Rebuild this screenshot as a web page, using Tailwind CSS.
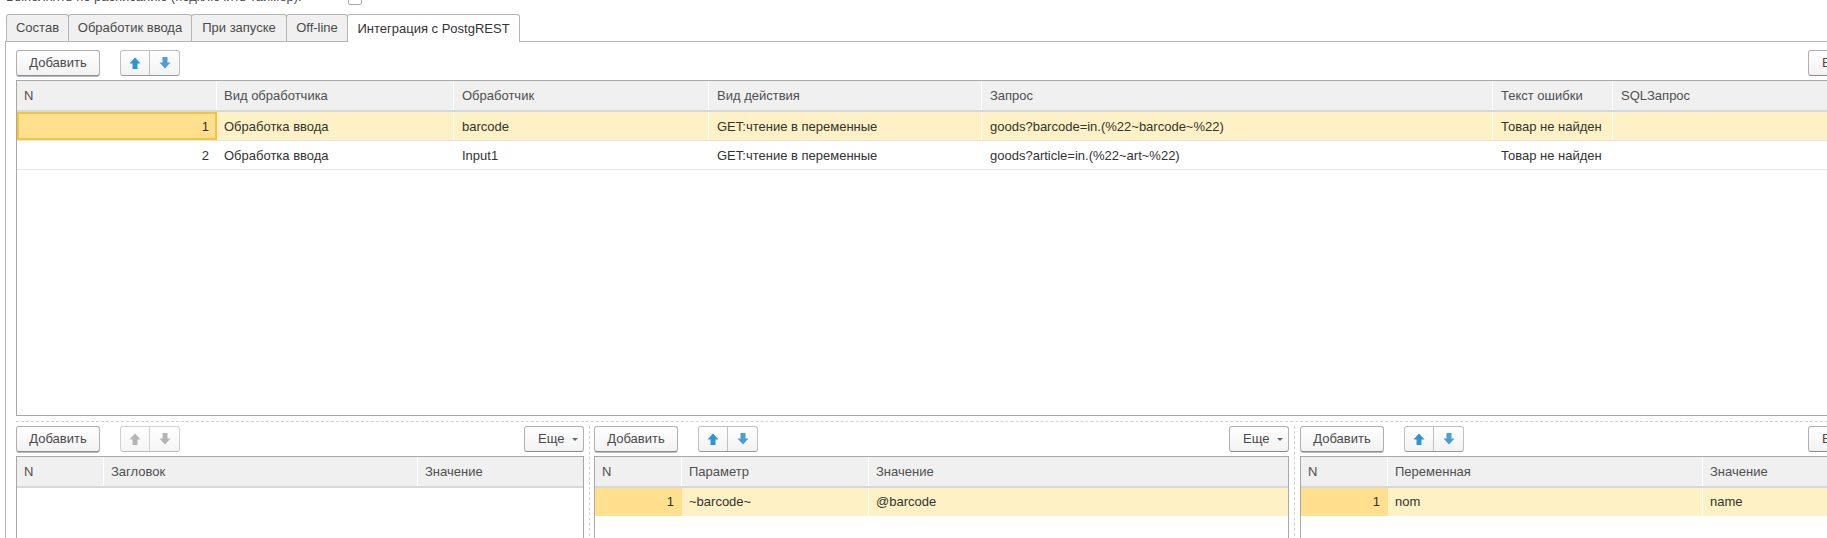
<!DOCTYPE html>
<html lang="ru">
<head>
    <meta charset="UTF-8">
    <title>Интеграция с PostgREST</title>
    <script src="https://cdn.jsdelivr.net/npm/@tailwindcss/browser@4"></script>
</head>
<body class="bg-white">
<div class="w-[1827px] h-[538px] overflow-hidden font-['Liberation_Sans',Arial,sans-serif] text-[13px] text-[#333]">

    <!-- clipped line above the tabs -->
    <div class="h-[5px] overflow-hidden flex items-end pl-[6px]">
        <span class="w-[342px] leading-[16px] whitespace-nowrap text-[#4b4b4b]">Выполнять по расписанию (подключить таймер):</span>
        <span class="block w-[14px] h-[14px] border border-[#aaa] rounded-[2px]"></span>
    </div>

    <!-- tabs -->
    <div class="flex h-[27px] mt-[9px] pl-[6px] text-[#4a4a4a]">
        <div class="w-[63px] flex items-center justify-center bg-[#f0f0f0] border border-b-0 border-[#b5b5b5] rounded-t-[3px]">Состав</div>
        <div class="w-[124px] -ml-px flex items-center justify-center bg-[#f0f0f0] border border-b-0 border-[#b5b5b5] rounded-t-[3px]">Обработик ввода</div>
        <div class="w-[96px] -ml-px flex items-center justify-center bg-[#f0f0f0] border border-b-0 border-[#b5b5b5] rounded-t-[3px]">При запуске</div>
        <div class="w-[62px] -ml-px flex items-center justify-center bg-[#f0f0f0] border border-b-0 border-[#b5b5b5] rounded-t-[3px]">Off-line</div>
        <div class="w-[173px] h-[28px] -ml-px z-10 flex items-center justify-center bg-white border border-b-0 border-[#b5b5b5] rounded-t-[3px] text-[#333]">Интеграция с PostgREST</div>
    </div>

    <!-- tab body -->
    <div class="w-[1900px] h-[497px] border-t border-l border-[#b5b5b5] ml-[5px] pl-[10px]">

        <!-- top toolbar -->
        <div class="flex items-center w-[1852px] h-[26px] mt-[8px] text-[#4a4a4a]">
            <button class="w-[84px] h-[26px] bg-gradient-to-b from-white to-[#f2f2f2] border border-[#b0b0b0] border-b-[#8a8a8a] rounded-[3px] shadow-[0_1px_0_#bbb]">Добавить</button>
            <div class="flex w-[60px] h-[26px] ml-[20px] bg-gradient-to-b from-white to-[#f2f2f2] border border-[#c0c0c0] border-b-[#999] rounded-[3px]">
                <span class="w-1/2 flex items-center justify-center border-r border-[#c0c0c0]"><svg width="12" height="12" viewBox="0 0 12 12"><path d="M6 0.5 11.5 6.5H8.5V12H3.5V6.5H0.5Z" fill="#2c96d2"/></svg></span>
                <span class="w-1/2 flex items-center justify-center"><svg width="12" height="12" viewBox="0 0 12 12"><path d="M6 11.5 11.5 5.5H8.5V0H3.5V5.5H0.5Z" fill="#4a9fd8"/></svg></span>
            </div>
            <button class="w-[60px] h-[26px] ml-auto flex items-center justify-start pl-[13px] gap-[8px] bg-gradient-to-b from-white to-[#f2f2f2] border border-[#b0b0b0] border-b-[#8a8a8a] rounded-[3px]">Еще<span class="w-0 h-0 border-x-[3px] border-t-[3px] border-x-transparent border-t-[#666]"></span></button>
        </div>

        <!-- handlers table -->
        <div class="w-[1852px] h-[336px] mt-[4px] border border-[#a8a8a8]">
            <div class="grid grid-cols-[200px_237px_255px_273px_511px_120px_1fr] h-[31px] bg-[#f0f0f0] border-b-2 border-[#d8d8d8] text-[#4f4f4f]">
                <div class="flex items-center px-[7px] border-r border-white">N</div>
                <div class="flex items-center px-[7px] border-r border-white">Вид обработчика</div>
                <div class="flex items-center px-[8px] border-r border-white">Обработчик</div>
                <div class="flex items-center px-[8px] border-r border-white">Вид действия</div>
                <div class="flex items-center px-[8px] border-r border-white">Запрос</div>
                <div class="flex items-center px-[8px] border-r border-white">Текст ошибки</div>
                <div class="flex items-center px-[8px]">SQLЗапрос</div>
            </div>
            <div class="grid grid-cols-[200px_237px_255px_273px_511px_120px_1fr] h-[29px] bg-[#fdf1c5] border-b border-[#e6e6e6]">
                <div class="flex items-center justify-end px-[6px] pt-[2px] bg-[#fee08e] border-2 border-[#f2c53d]">1</div>
                <div class="flex items-center px-[7px] pt-[2px] border-r border-white">Обработка ввода</div>
                <div class="flex items-center px-[8px] pt-[2px] border-r border-white">barcode</div>
                <div class="flex items-center px-[8px] pt-[2px] border-r border-white">GET:чтение в переменные</div>
                <div class="flex items-center px-[8px] pt-[2px] border-r border-white">goods?barcode=in.(%22~barcode~%22)</div>
                <div class="flex items-center px-[8px] pt-[2px] border-r border-white">Товар не найден</div>
                <div></div>
            </div>
            <div class="grid grid-cols-[200px_237px_255px_273px_511px_120px_1fr] h-[29px] border-b border-[#e6e6e6]">
                <div class="flex items-center justify-end px-[8px] pt-[2px]">2</div>
                <div class="flex items-center px-[7px] pt-[2px]">Обработка ввода</div>
                <div class="flex items-center px-[8px] pt-[2px]">Input1</div>
                <div class="flex items-center px-[8px] pt-[2px]">GET:чтение в переменные</div>
                <div class="flex items-center px-[8px] pt-[2px]">goods?article=in.(%22~art~%22)</div>
                <div class="flex items-center px-[8px] pt-[2px]">Товар не найден</div>
                <div></div>
            </div>
        </div>

        <!-- horizontal splitter -->
        <div class="w-[1852px] mt-[5px] border-t border-dashed border-[#d0d0d0]"></div>

        <!-- lower panels -->
        <div class="flex mt-[4px] w-[1852px] h-[120px]">

            <!-- headers -->
            <div class="w-[568px] shrink-0">
                <div class="flex items-center h-[26px] text-[#4a4a4a]">
                    <button class="w-[84px] h-[26px] bg-gradient-to-b from-white to-[#f2f2f2] border border-[#b0b0b0] border-b-[#8a8a8a] rounded-[3px] shadow-[0_1px_0_#bbb]">Добавить</button>
                    <div class="flex w-[60px] h-[26px] ml-[20px] bg-gradient-to-b from-white to-[#f5f5f5] border border-[#d0d0d0] border-b-[#bbb] rounded-[3px]">
                        <span class="w-1/2 flex items-center justify-center border-r border-[#d0d0d0]"><svg width="12" height="12" viewBox="0 0 12 12"><path d="M6 0.5 11.5 6.5H8.5V12H3.5V6.5H0.5Z" fill="#b5b5b5"/></svg></span>
                        <span class="w-1/2 flex items-center justify-center"><svg width="12" height="12" viewBox="0 0 12 12"><path d="M6 11.5 11.5 5.5H8.5V0H3.5V5.5H0.5Z" fill="#b5b5b5"/></svg></span>
                    </div>
                    <button class="w-[60px] h-[26px] ml-auto flex items-center justify-start pl-[13px] gap-[8px] bg-gradient-to-b from-white to-[#f2f2f2] border border-[#b0b0b0] border-b-[#8a8a8a] rounded-[3px]">Еще<span class="w-0 h-0 border-x-[3px] border-t-[3px] border-x-transparent border-t-[#666]"></span></button>
                </div>
                <div class="h-[90px] mt-[4px] border border-[#a8a8a8]">
                    <div class="grid grid-cols-[87px_314px_1fr] h-[31px] bg-[#f0f0f0] border-b-2 border-[#d8d8d8] text-[#4f4f4f]">
                        <div class="flex items-center px-[7px] border-r border-white">N</div>
                        <div class="flex items-center px-[7px] border-r border-white">Загловок</div>
                        <div class="flex items-center px-[7px]">Значение</div>
                    </div>
                </div>
            </div>

            <!-- vertical splitter -->
            <div class="w-[10px] shrink-0 flex justify-center"><div class="h-full border-l border-dashed border-[#d0d0d0]"></div></div>

            <!-- parameters -->
            <div class="w-[695px] shrink-0">
                <div class="flex items-center h-[26px] text-[#4a4a4a]">
                    <button class="w-[84px] h-[26px] bg-gradient-to-b from-white to-[#f2f2f2] border border-[#b0b0b0] border-b-[#8a8a8a] rounded-[3px] shadow-[0_1px_0_#bbb]">Добавить</button>
                    <div class="flex w-[60px] h-[26px] ml-[20px] bg-gradient-to-b from-white to-[#f2f2f2] border border-[#c0c0c0] border-b-[#999] rounded-[3px]">
                        <span class="w-1/2 flex items-center justify-center border-r border-[#c0c0c0]"><svg width="12" height="12" viewBox="0 0 12 12"><path d="M6 0.5 11.5 6.5H8.5V12H3.5V6.5H0.5Z" fill="#2c96d2"/></svg></span>
                        <span class="w-1/2 flex items-center justify-center"><svg width="12" height="12" viewBox="0 0 12 12"><path d="M6 11.5 11.5 5.5H8.5V0H3.5V5.5H0.5Z" fill="#4a9fd8"/></svg></span>
                    </div>
                    <button class="w-[60px] h-[26px] ml-auto flex items-center justify-start pl-[13px] gap-[8px] bg-gradient-to-b from-white to-[#f2f2f2] border border-[#b0b0b0] border-b-[#8a8a8a] rounded-[3px]">Еще<span class="w-0 h-0 border-x-[3px] border-t-[3px] border-x-transparent border-t-[#666]"></span></button>
                </div>
                <div class="h-[90px] mt-[4px] border border-[#a8a8a8]">
                    <div class="grid grid-cols-[87px_187px_1fr] h-[31px] bg-[#f0f0f0] border-b-2 border-[#d8d8d8] text-[#4f4f4f]">
                        <div class="flex items-center px-[7px] border-r border-white">N</div>
                        <div class="flex items-center px-[7px] border-r border-white">Параметр</div>
                        <div class="flex items-center px-[7px]">Значение</div>
                    </div>
                    <div class="grid grid-cols-[87px_187px_1fr] h-[28px] bg-[#fdf1c5]">
                        <div class="flex items-center justify-end px-[8px] bg-[#fee08e]">1</div>
                        <div class="flex items-center px-[7px] border-r border-white">~barcode~</div>
                        <div class="flex items-center px-[7px]">@barcode</div>
                    </div>
                </div>
            </div>

            <!-- vertical splitter -->
            <div class="w-[11px] shrink-0 flex justify-center"><div class="h-full border-l border-dashed border-[#d0d0d0]"></div></div>

            <!-- variables -->
            <div class="flex-1">
                <div class="flex items-center h-[26px] text-[#4a4a4a]">
                    <button class="w-[84px] h-[26px] bg-gradient-to-b from-white to-[#f2f2f2] border border-[#b0b0b0] border-b-[#8a8a8a] rounded-[3px] shadow-[0_1px_0_#bbb]">Добавить</button>
                    <div class="flex w-[60px] h-[26px] ml-[20px] bg-gradient-to-b from-white to-[#f2f2f2] border border-[#c0c0c0] border-b-[#999] rounded-[3px]">
                        <span class="w-1/2 flex items-center justify-center border-r border-[#c0c0c0]"><svg width="12" height="12" viewBox="0 0 12 12"><path d="M6 0.5 11.5 6.5H8.5V12H3.5V6.5H0.5Z" fill="#2c96d2"/></svg></span>
                        <span class="w-1/2 flex items-center justify-center"><svg width="12" height="12" viewBox="0 0 12 12"><path d="M6 11.5 11.5 5.5H8.5V0H3.5V5.5H0.5Z" fill="#4a9fd8"/></svg></span>
                    </div>
                    <button class="w-[60px] h-[26px] ml-auto flex items-center justify-start pl-[13px] gap-[8px] bg-gradient-to-b from-white to-[#f2f2f2] border border-[#b0b0b0] border-b-[#8a8a8a] rounded-[3px]">Еще<span class="w-0 h-0 border-x-[3px] border-t-[3px] border-x-transparent border-t-[#666]"></span></button>
                </div>
                <div class="h-[90px] mt-[4px] border border-[#a8a8a8]">
                    <div class="grid grid-cols-[87px_315px_1fr] h-[31px] bg-[#f0f0f0] border-b-2 border-[#d8d8d8] text-[#4f4f4f]">
                        <div class="flex items-center px-[7px] border-r border-white">N</div>
                        <div class="flex items-center px-[7px] border-r border-white">Переменная</div>
                        <div class="flex items-center px-[7px]">Значение</div>
                    </div>
                    <div class="grid grid-cols-[87px_315px_1fr] h-[28px] bg-[#fdf1c5]">
                        <div class="flex items-center justify-end px-[8px] bg-[#fee08e]">1</div>
                        <div class="flex items-center px-[7px] border-r border-white">nom</div>
                        <div class="flex items-center px-[7px]">name</div>
                    </div>
                </div>
            </div>
        </div>
    </div>
</div>
</body>
</html>
